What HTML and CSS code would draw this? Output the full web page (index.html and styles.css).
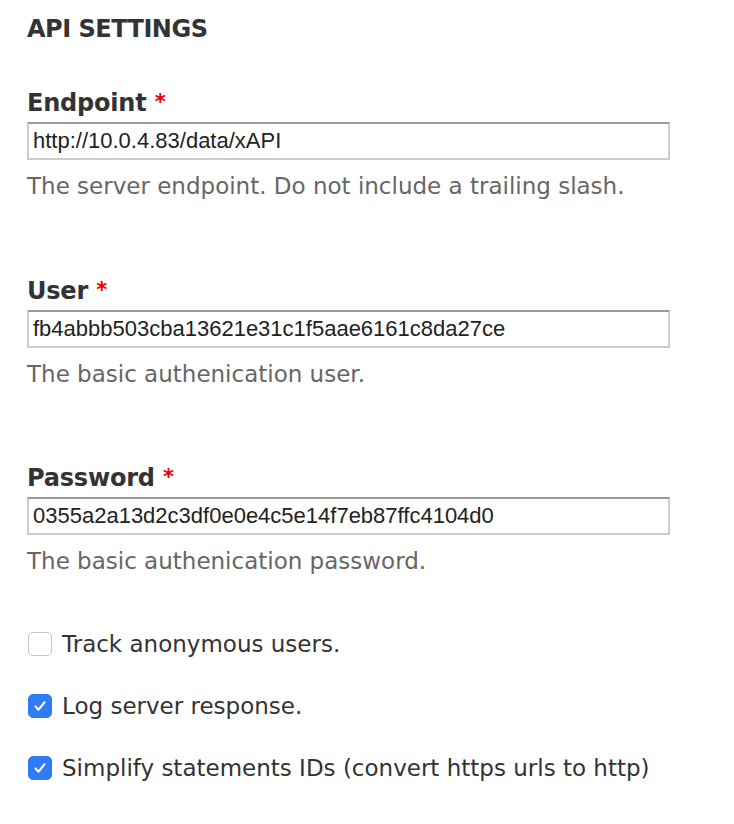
FILE: index.html
```html
<!DOCTYPE html>
<html>
<head>
<meta charset="utf-8">
<link rel="stylesheet" href="styles.css">
</head>
<body>
<div class="page">
  <h2 class="section-title">API SETTINGS</h2>

  <div class="field">
    <label class="field-label">Endpoint <span class="req">*</span></label>
    <input class="text-input" type="text" value="http://10.0.4.83/data/xAPI">
    <div class="desc">The server endpoint. Do not include a trailing slash.</div>
  </div>

  <div class="field">
    <label class="field-label">User <span class="req">*</span></label>
    <input class="text-input" type="text" value="fb4abbb503cba13621e31c1f5aae6161c8da27ce">
    <div class="desc">The basic authenication user.</div>
  </div>

  <div class="field field-last">
    <label class="field-label">Password <span class="req">*</span></label>
    <input class="text-input" type="text" value="0355a2a13d2c3df0e0e4c5e14f7eb87ffc4104d0">
    <div class="desc">The basic authenication password.</div>
  </div>

  <div class="checks">
    <label class="check-row"><span class="box"></span><span class="check-text">Track anonymous users.</span></label>
    <label class="check-row"><span class="box checked"><svg viewBox="0 0 24 24" width="24" height="24"><path d="M6.5 12.5l3.6 4 7.4-9" fill="none" stroke="#fff" stroke-width="2.4" stroke-linecap="round" stroke-linejoin="round"/></svg></span><span class="check-text">Log server response.</span></label>
    <label class="check-row"><span class="box checked"><svg viewBox="0 0 24 24" width="24" height="24"><path d="M6.5 12.5l3.6 4 7.4-9" fill="none" stroke="#fff" stroke-width="2.4" stroke-linecap="round" stroke-linejoin="round"/></svg></span><span class="check-text">Simplify statements IDs (convert https urls to http)</span></label>
  </div>
</div>
</body>
</html>
```

FILE: styles.css
```css
html, body {
  margin: 0;
  padding: 0;
  background: #fff;
}
.page {
  padding: 12px 0 0 27px;
  width: 643px;
  font-family: "DejaVu Sans", Verdana, sans-serif;
  color: #333;
}
.section-title {
  margin: 0 0 41px 0;
  font-size: 24px;
  font-weight: bold;
  line-height: 34px;
  color: #333;
  letter-spacing: -0.5px;
}
.field {
  margin-bottom: 73.5px;
}
.field.field-last {
  margin-bottom: 52px;
}
.field-label {
  display: block;
  font-size: 24px;
  font-weight: bold;
  line-height: 30px;
  margin-bottom: 4px;
  color: #333;
  letter-spacing: -0.2px;
}
.req {
  color: #e00;
  font-size: 21px;
  vertical-align: 2px;
}
.text-input {
  display: block;
  box-sizing: border-box;
  width: 643px;
  height: 38px;
  margin: 0;
  padding: 0 4px;
  border: 2px solid #ccc;
  border-top-color: #999;
  font-family: "Liberation Sans", Arial, sans-serif;
  font-size: 22px;
  color: #222;
  background: #fff;
  outline: none;
}
.desc {
  margin-top: 11px;
  font-size: 23px;
  line-height: 30px;
  color: #666;
}
.check-row {
  display: flex;
  align-items: center;
  gap: 10px;
  height: 32px;
  margin-bottom: 30px;
  font-size: 23px;
  color: #333;
  padding-left: 1px;
}
.box {
  box-sizing: border-box;
  width: 24px;
  height: 24px;
  border-radius: 5px;
  border: 1.5px solid #c4c4c4;
  background: #fff;
  display: flex;
  align-items: center;
  justify-content: center;
  flex: none;
}
.box.checked {
  background: #2f7cf6;
  border-color: #2f7cf6;
}
.box svg {
  width: 20px;
  height: 20px;
}
```
